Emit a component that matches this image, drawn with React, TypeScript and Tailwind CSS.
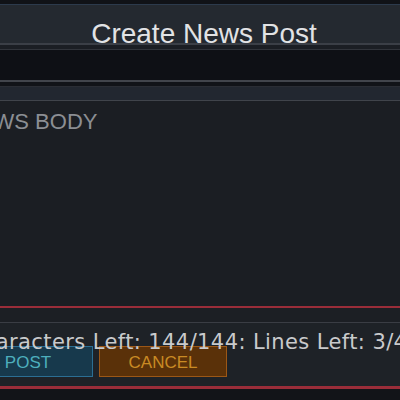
const font = { fontFamily: '"Liberation Sans", Arial, sans-serif' };
const wide = { fontFamily: '"DejaVu Sans", "Liberation Sans", sans-serif' };

export default function App() {
    return (
        <div
            className="w-[400px] h-[400px] overflow-hidden bg-[#111318] flex flex-col"
            style={font}
        >
            <div className="h-[4px] bg-[#101217]" />
            <div className="h-[1px] bg-[#2c3a4c]" />
            <div className="h-[38px] bg-[#242930] flex items-end justify-center pl-[8px]">
                <span className="text-[28px] leading-none text-[#e2e3e5] translate-y-[5px]">
                    Create News Post
                </span>
            </div>
            <div className="h-[2px] bg-[#3b3f47] relative" />
            <div className="h-[4px] bg-[#1b1e24]" />
            <div className="h-[1px] bg-[#31343b]" />
            {/* title input */}
            <div className="h-[30px] bg-[#0e1015]" />
            <div className="h-[2px] bg-[#42454c]" />
            <div className="h-[4px] bg-[#111318]" />
            <div className="h-[1px] bg-[#2a2d34]" />
            <div className="h-[13px] bg-[#222730]" />
            <div className="h-[1px] bg-[#40444b]" />

            {/* body textarea */}
            <div className="h-[205px] bg-[#1b1e23] ml-[-46px] pl-[9px] pt-[10px]">
                <span className="text-[22px] leading-none text-[#8b8e93] whitespace-nowrap">
                    NEWS BODY
                </span>
            </div>

            {/* footer */}
            <div className="h-[2px] bg-[#9a2d39]" />
            <div className="h-[14px] bg-[#1c1f24]" />
            <div className="h-[1px] bg-[#3a3d44]" />
            <div className="h-[63px] bg-[#1e2227] ml-[-37px] flex flex-col">
                <div className="h-[23px] pl-[4px] flex items-end whitespace-nowrap" style={wide}>
                    <span className="text-[21px] leading-none tracking-[0.4px] text-[#c9cacc] translate-y-[7px]">
                        Characters Left: 144/144: Lines Left: 3/4
                    </span>
                </div>
                <div className="flex gap-[6px] h-[31px]">
                    <button className="w-[130px] h-full bg-[#17394c] border border-[#2b6e93] text-[#4daebd] text-[17px] leading-none pt-[2px]">
                        POST
                    </button>
                    <button className="w-[128px] h-full bg-[#5a3109] border border-[#9c5716] text-[#c98a24] text-[17px] leading-none pt-[2px]">
                        CANCEL
                    </button>
                </div>
            </div>
            <div className="h-[3px] bg-[#9a2d39]" />
            <div className="flex-1 bg-[#121418]" />
        </div>
    );
}
